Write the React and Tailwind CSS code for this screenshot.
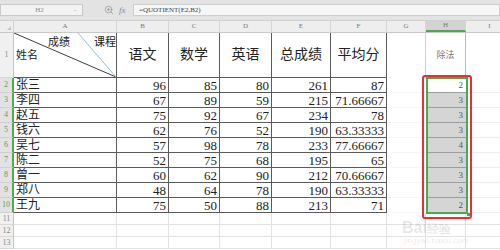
import React from 'react';
import { ZoomIn } from 'lucide-react';

const cols = [
  { key: 'A', w: 'w-[103px]' },
  { key: 'B', w: 'w-[52px]' },
  { key: 'C', w: 'w-[51px]' },
  { key: 'D', w: 'w-[52px]' },
  { key: 'E', w: 'w-[59px]' },
  { key: 'F', w: 'w-[56px]' },
  { key: 'G', w: 'w-[39px]' },
  { key: 'H', w: 'w-[40px]' },
  { key: 'I', w: 'w-[48px]' },
];

const rows = [
  ['张三', '96', '85', '80', '261', '87', '2'],
  ['李四', '67', '89', '59', '215', '71.66667', '3'],
  ['赵五', '75', '92', '67', '234', '78', '3'],
  ['钱六', '62', '76', '52', '190', '63.33333', '3'],
  ['吴七', '57', '98', '78', '233', '77.66667', '4'],
  ['陈二', '52', '75', '68', '195', '65', '3'],
  ['曾一', '60', '62', '90', '212', '70.66667', '3'],
  ['郑八', '48', '64', '78', '190', '63.33333', '3'],
  ['王九', '75', '50', '88', '213', '71', '2'],
];

const headers = ['语文', '数学', '英语', '总成绩', '平均分'];

const serif = "font-['Liberation_Serif','Noto_Sans_CJK_SC',serif]";

function RowHead({ n, h, selected }) {
  return (
    <div
      className={
        'w-[14px] shrink-0 flex items-center justify-center text-[8px] leading-none border-b ' +
        h +
        (selected
          ? ' bg-[#e2e2e2] text-[#5f9a5f] border-b-[#cfcfcf] border-r-2 border-r-[#55a655]'
          : ' bg-[#f0f0f0] text-[#8a8a8a] border-b-[#d8d8d8] border-r border-r-[#c4c4c4]')
      }
    >
      {n}
    </div>
  );
}

export default function App() {
  return (
    <div className={'relative w-[500px] h-[250px] overflow-hidden bg-white ' + serif}>
      {/* formula bar */}
      <div className="h-[21px] bg-[#e3e3e3] flex items-center border-b border-[#d0d0d0]">
        <div className="w-[83px] h-[12px] bg-[#f3f3f3] border border-[#c9c9c9] flex items-center">
          <span className="flex-1 text-center text-[7px] leading-none text-[#8a8a8a] pl-[4px]">H2</span>
          <span className="w-[8px] text-[7px] leading-none text-[#999]">-</span>
        </div>
        <div className="w-[50px] flex items-center gap-[5px] pl-[21px]">
          <ZoomIn size={10} strokeWidth={1.6} className="text-[#8c8c8c]" />
          <span className="italic text-[9px] leading-none text-[#8c8c8c]">fx</span>
        </div>
        <div className="flex-1 h-[12px] bg-[#f6f6f6] border border-[#cfcfcf] flex items-center pl-[5px]">
          <span className="text-[7px] leading-none text-[#444]">=QUOTIENT(E2,B2)</span>
        </div>
      </div>

      {/* column letters */}
      <div className="flex h-[12px] bg-[#eeeeee] border-b border-[#c8c8c8]">
        <div className="w-[14px] shrink-0 border-r border-[#d0d0d0] flex items-end justify-end">
          <div className="w-0 h-0 border-l-[4px] border-l-transparent border-b-[4px] border-b-[#c4c4c4] mr-[2px] mb-[2px]" />
        </div>
        {cols.map((c) => (
          <div
            key={c.key}
            className={
              c.w +
              ' shrink-0 flex items-center justify-center text-[7px] leading-none text-[#777] border-r border-[#d6d6d6]' +
              (c.key === 'H' ? ' bg-[#d3d3d3] border-b-2 border-b-[#4fa64f]' : '')
            }
          >
            {c.key}
          </div>
        ))}
      </div>

      {/* row 1 */}
      <div className="flex h-[45px]">
        <RowHead n="1" h="h-[45px]" selected={false} />
        <div className="relative w-[103px] shrink-0 border-r border-b border-[#5a5a5a]">
          <svg className="absolute inset-0" width="102" height="44" viewBox="0 0 102 44">
            <line x1="0" y1="0" x2="102" y2="44" stroke="#3c3c3c" strokeWidth="1" />
            <line x1="64" y1="0" x2="102" y2="44" stroke="#8fc3da" strokeWidth="1" />
          </svg>
          <span className="absolute left-[34px] top-[4px] whitespace-nowrap text-[11px] leading-none text-[#222]">成绩</span>
          <span className="absolute left-[80px] top-[4px] whitespace-nowrap text-[11px] leading-none text-[#222]">课程</span>
          <span className="absolute left-[2px] top-[17px] whitespace-nowrap text-[11px] leading-none text-[#222]">姓名</span>
        </div>
        {headers.map((t, i) => (
          <div
            key={t}
            className={
              cols[i + 1].w +
              ' shrink-0 flex items-center justify-center text-[14px] leading-none text-[#222] border-r border-b border-[#5a5a5a]'
            }
          >
            {t}
          </div>
        ))}
        <div className="w-[39px] shrink-0 border-r border-[#cfcfcf]" />
        <div className="w-[40px] shrink-0 flex items-center justify-center text-[9px] leading-none text-[#777] border-r border-[#bcbcbc]">
          除法
        </div>
        <div className="w-[48px] shrink-0" />
      </div>

      {/* rows 2-10 */}
      {rows.map((r, i) => (
        <div key={r[0]} className="flex h-[15px]">
          <RowHead n={String(i + 2)} h="h-[15px]" selected />
          <div className="w-[103px] shrink-0 flex items-center pl-[2px] text-[12px] leading-none text-[#222] border-r border-b border-[#5a5a5a]">
            {r[0]}
          </div>
          {r.slice(1, 6).map((v, j) => (
            <div
              key={j}
              className={
                cols[j + 1].w +
                ' shrink-0 flex items-center justify-end pr-[2px] text-[13px] leading-none text-[#222] border-r border-b border-[#5a5a5a]'
              }
            >
              {v}
            </div>
          ))}
          <div className="w-[39px] shrink-0 border-b border-[#f6f6f6]" />
          <div
            className={
              'w-[40px] shrink-0 flex items-center justify-end pr-[3px] text-[9px] leading-none text-[#555] border-b border-[#9c9c9c]' +
              (i === 0 ? ' bg-white' : ' bg-[#d5d5d5]')
            }
          >
            {r[6]}
          </div>
          <div className="w-[48px] shrink-0 border-l border-b border-[#ececec]" />
        </div>
      ))}

      {/* rows 11-13 */}
      {['11', '12', '13'].map((n) => (
        <div key={n} className="flex h-[12px]">
          <RowHead n={n} h="h-[12px]" selected={false} />
          {cols.map((c) => (
            <div key={c.key} className={c.w + ' shrink-0 border-r border-b border-[#e2e2e2]'} />
          ))}
        </div>
      ))}

      {/* selection + annotation */}
      <div className="absolute left-[426px] top-[77px] w-[42px] h-[137px] border-2 border-[#4caa4c]" />
      <div className="absolute left-[422px] top-[75px] w-[50px] h-[144px] border-2 border-[#e8302c] rounded-[3px]" />
      <div className="absolute left-[467px] top-[213px] w-[3px] h-[3px] bg-[#4caa4c]" />

      {/* watermark */}
      <div className="absolute left-[402px] top-[220px] text-[16px] font-bold text-[#000]/10 font-['Liberation_Sans',sans-serif] leading-none">
        Bai<span className="text-[12px]">经验</span>
      </div>
      <div className="absolute left-[404px] top-[237px] text-[8px] leading-none text-[#000]/10 font-['Liberation_Sans',sans-serif]">
        jingyan.baidu.com
      </div>
    </div>
  );
}
